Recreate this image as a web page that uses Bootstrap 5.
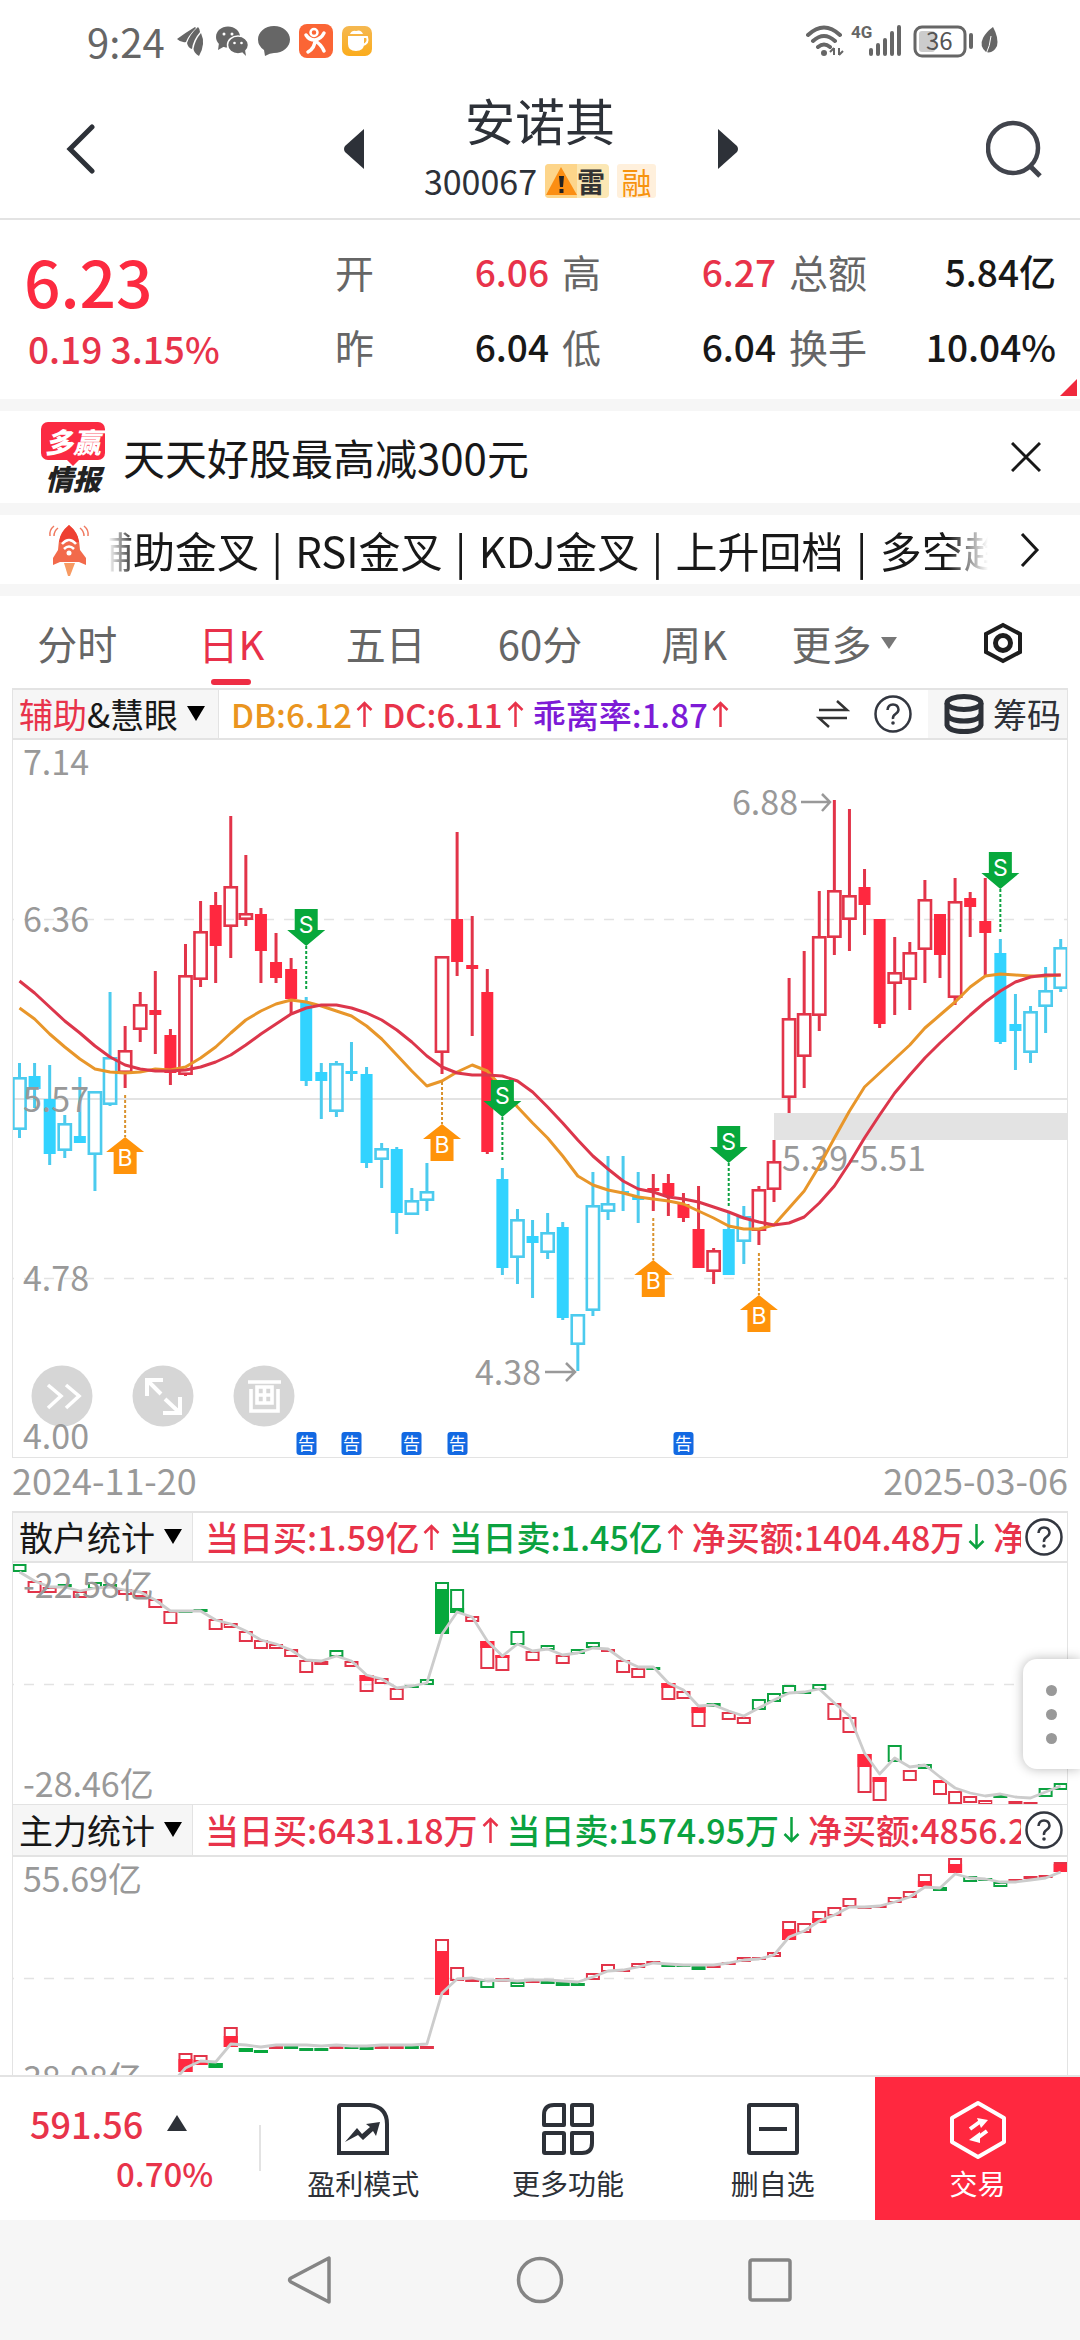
<!DOCTYPE html>
<html lang="zh-CN">
<head>
<meta charset="utf-8">
<meta name="viewport" content="width=device-width, initial-scale=1">
<title>安诺其 300067</title>
<link href="https://cdn.jsdelivr.net/npm/bootstrap@5.3.0/dist/css/bootstrap.min.css" rel="stylesheet">
<style>
:root{--up:#e8334a;--solid:#ff283f;--dn:#0ba23f;--ink:#2d3138;--line:#e3e3e3}
body{font-family:"Noto Sans CJK SC","Noto Sans",sans-serif;color:#181818;font-size:34px;line-height:1;background:#fff}
button{background:none;border:0;padding:0;color:inherit;font:inherit;line-height:1}
a{color:inherit;text-decoration:none}
svg{display:block;flex:none}
.app{height:100vh;overflow:hidden}
.c-up{color:var(--up)}.c-dn{color:var(--dn)}.c-db{color:#ea951f}.c-bias{color:#7d1bd6}
.fw-num{font-weight:500}
.status{height:80px;padding:2px 80px 0 87px;color:#666;font-size:40px}
.head{height:140px;border-bottom:2px solid var(--line);padding:0 38px 0 66px;color:var(--ink)}
.head .names{width:354px;padding:0 2px 11px 0}
.head .title{font-size:50px;font-weight:400;margin:0 0 15px}
.head .code{font-size:34px}
.tag-lei{background:#fbe7b4;color:#333;font-size:28px;height:34px;width:64px;border-radius:4px;font-weight:700}
.tag-rong{background:#fff0dc;color:#f7930e;font-size:30px;height:34px;width:39px;border-radius:3px}
.gap-bar{height:12px;background:#f6f6f6;flex:none}
.quote{height:179px;padding-left:24px}
.quote .last{width:311px;padding-bottom:4px}
.quote .price{font-size:64px;color:#fc2a40;font-weight:500;margin-bottom:18px}
.quote .chg{font-size:37px;padding-left:4px}
.quote dl{display:grid;grid-template-columns:214fr 214fr 267fr;column-gap:13px;row-gap:35px;margin:0;padding:0 24px 2px 0}
.quote dl>div{display:flex;justify-content:space-between;align-items:center;height:40px}
.quote dt{font-size:39px;font-weight:400;color:#666}
.quote dd{font-size:37px;font-weight:500;margin:0}
.corner{width:17px;height:17px;right:3px;bottom:3px;background:#f0293d;clip-path:polygon(100% 0,100% 100%,0 100%)}
.promo{height:92px;padding:0 39px 0 40px;font-size:42px}
.promo .brand{width:66px;margin-right:17px}
.promo .brand b{height:38px;font-size:28px;font-weight:900;font-style:italic;color:#fff;background:#fb2a42;border-radius:7px}
.promo .brand b::after{content:"";position:absolute;left:50%;top:100%;margin-left:-6px;border:6px solid transparent;border-top-color:#fb2a42;border-bottom:0}
.promo .brand i{font-size:28px;font-weight:900;color:#222}
.tick{height:69px;padding:0 40px 0 48px;font-size:42px}
.tick .run{text-indent:-17px;line-height:60px;-webkit-mask-image:linear-gradient(90deg,transparent 0,#000 28px,#000 calc(100% - 40px),transparent);mask-image:linear-gradient(90deg,transparent 0,#000 28px,#000 calc(100% - 40px),transparent)}
.tick .run s{text-decoration:none;margin:0 3px}
.tabs{height:92px;font-size:40px;color:#666}
.tabs>*{flex:1 1 0;height:92px;padding-top:1px}
.tabs .on{color:#e8304a}
.tabs .on::after{content:"";position:absolute;left:50%;bottom:3px;width:40px;height:6px;margin-left:-20px;border-radius:3px;background:#ee2d44}
.panel{margin:0 12px;border:1px solid var(--line);border-width:2px 1px 1px}
.bar{height:50px;border-bottom:2px solid var(--line)}
.bar .pick{flex:none;white-space:nowrap;background:#f6f6f6;border-right:1px solid var(--line);height:48px;width:206px;padding-left:6px}
.bar .vals{gap:8px;padding-left:12px;line-height:48px}
.bar .vals.ind{gap:9px;font-size:33px}
.bar .vals span{white-space:nowrap;display:inline-flex;align-items:center}
.bar .vals .arw{margin-left:4px}
.chips{background:#f6f6f6;height:48px;width:139px;gap:9px;padding-right:6px;color:var(--ink)}
.stat{border-top:0}
.stat .bar{height:52px}
.stat .bar .pick{height:50px}
.bar .pick.narrow{width:180px}
.dates{height:53px;font-size:36px;color:#999;margin:0 12px;padding-bottom:11px}
.chart{width:100%;height:auto;font-family:"Noto Sans CJK SC",sans-serif}
.arw{width:17px;height:28px}
.qm{width:38px;height:38px}
.side{right:0;top:1659px;width:57px;height:110px;gap:13px;background:#fff;border-radius:14px 0 0 14px;box-shadow:0 0 12px rgba(0,0,0,.28)}
.side i{width:11px;height:11px;border-radius:50%;background:#999}
.foot{height:145px;border-top:2px solid var(--line);background:#fff;color:var(--ink);font-size:28px;flex:none}
.foot .idx{width:261px;padding:0 0 3px 30px;height:143px}
.foot .idx::after{content:"";position:absolute;right:0;top:48px;height:46px;width:2px;background:var(--line)}
.foot .idx .pts{font-size:36px}
.foot .idx .pct{font-size:33px;padding-left:86px}
.foot .act{flex:1 1 0;height:143px;gap:13px;padding-top:2px}
.foot .trade{background:#ff283f;color:#fff;gap:9px;padding-top:0}
.sysnav{height:120px;background:#f6f6f6;flex:none}
.sysnav>*{width:230px}
</style>
</head>
<body>
<div class="app d-flex flex-column position-relative">

<div class="status d-flex align-items-center justify-content-between flex-shrink-0">
  <div class="d-flex align-items-center">
    <span>9:24</span>
    <svg class="ms-2 me-2" width="34" height="34" viewBox="0 0 34 34" fill="#666"><path d="M4 15Q12 9 22 3L23 4Q15 12 13 18Q8 19 4 15Z"/><path d="M25 3Q27 5 27 8Q20 16 19 25Q15 24 14 19Q17 10 25 3Z"/><path d="M28 9Q33 20 26 32Q21 29 20.500 25Q22 16 28 9Z"/></svg>
    <svg width="34" height="34" viewBox="0 0 34 34"><ellipse cx="13" cy="13" rx="12" ry="10.500" fill="#666"/><path d="M4 19L3 26L10 22Z" fill="#666"/><circle cx="9" cy="10" r="1.500" fill="#fff"/><circle cx="17" cy="10" r="1.500" fill="#fff"/><ellipse cx="23" cy="21" rx="10.500" ry="9" fill="#666" stroke="#fff" stroke-width="1.500"/><path d="M26 27L31 32L30 26Z" fill="#666"/><circle cx="19.500" cy="19" r="1.300" fill="#fff"/><circle cx="26.500" cy="19" r="1.300" fill="#fff"/></svg>
    <svg class="ms-2" width="34" height="32" viewBox="0 0 34 32" fill="#666"><path d="M17 1C26 1 33 7 33 14.500S26 28 17 28Q13 28 8 31L7 25Q1 21 1 14.500C1 7 8 1 17 1Z"/></svg>
    <svg class="ms-2" width="34" height="34" viewBox="0 0 34 34"><rect width="34" height="34" rx="8" fill="#fb6535"/><circle cx="15" cy="8.500" r="3.500" fill="none" stroke="#fff" stroke-width="2.500"/><path d="M7 11Q10 16 16 16Q22 15 25 9M16 16Q16 24 9 28M16 17Q22 20 25 27" fill="none" stroke="#fff" stroke-width="3.500" stroke-linecap="round"/></svg>
    <svg class="ms-2" width="34" height="30" viewBox="0 0 34 30"><defs><linearGradient id="cup" x2="0" y2="1"><stop stop-color="#f5b851"/><stop offset="1" stop-color="#fbac1c"/></linearGradient></defs><rect x="1" width="30" height="30" rx="7" fill="url(#cup)"/><path d="M7 10H23V18Q23 25 15 25Q7 25 7 18ZM9 8Q11 4 15 5Q20 3 22 8Z" fill="#fff"/><path d="M23 11H26Q28 17 22 19" fill="none" stroke="#fff" stroke-width="2"/></svg>
  </div>
  <svg width="194" height="36" viewBox="806 23 194 36" fill="none" stroke="#666"><path d="M808 35Q824 20 840 35M813 41Q824 31 835 41M818 47Q824 42 830 47" stroke-width="4" stroke-linecap="round"/><circle cx="824" cy="53" r="3" fill="#666" stroke="none"/><path d="M834 48V55M830 52L834 48M839 55V48M839 55L843 51" stroke-width="2"/><text x="851" y="38" font-size="17" font-weight="700" fill="#666" stroke="none" font-family="Roboto,sans-serif">4G</text><path d="M871 50V54M878 45V54M885 40V54M892 33V54M899 27V54" stroke-width="4" stroke-linecap="round"/><rect x="915" y="27" width="50" height="29" rx="7" stroke-width="3"/><rect x="919" y="31" width="16" height="21" rx="3" fill="#ccc" stroke="none"/><text x="926" y="50" font-size="24" fill="#555" stroke="none">36</text><path d="M971 35V47" stroke-width="4" stroke-linecap="round"/><path d="M993 27Q999 38 997 46Q993 54 986 52Q979 46 983 38Q986 32 993 27Z" fill="#666" stroke="none"/><path d="M991 36Q990 46 986 54" stroke="#fff" stroke-width="1"/></svg>
</div>

<header class="head d-flex align-items-center justify-content-between flex-shrink-0">
  <button aria-label="返回"><svg width="30" height="50" viewBox="0 0 30 50" fill="none" stroke="#2d3138" stroke-width="5" stroke-linecap="round"><path d="M26 3L4 25L26 47"/></svg></button>
  <div class="d-flex align-items-center">
    <button aria-label="上一只"><svg width="20" height="40" viewBox="0 0 20 40" fill="#2d3138"><path d="M20 0V40L1 23Q-1 20 1 17Z"/></svg></button>
    <div class="names text-center">
      <h1 class="title">安诺其</h1>
      <div class="code d-flex justify-content-center align-items-center"><span>300067</span>
        <span class="tag-lei d-flex align-items-center ms-2 me-1"><svg width="32" height="34" viewBox="0 0 32 34"><path d="M4 0H32V34H4Q0 34 0 30V4Q0 0 4 0Z" fill="#fdd58a"/><path d="M16 3L32 31H1Z" fill="#fb8e13"/><path d="M14 12H19L18 23H15ZM14.500 25H18.500V29H14.500Z" fill="#222"/></svg>雷</span>
        <span class="tag-rong d-flex align-items-center justify-content-center ms-1">融</span></div>
    </div>
    <button aria-label="下一只"><svg width="20" height="40" viewBox="0 0 20 40" fill="#2d3138"><path d="M0 0V40L19 23Q21 20 19 17Z"/></svg></button>
  </div>
  <button aria-label="搜索"><svg width="56" height="58" viewBox="0 0 56 58" fill="none" stroke="#41444c" stroke-width="4.500"><circle cx="27" cy="28" r="25"/><path d="M44 46L54 56" stroke-width="5"/></svg></button>
</header>

<section class="quote d-flex align-items-center position-relative flex-shrink-0">
  <div class="last"><div class="price">6.23</div><div class="chg fw-num c-up">0.19 3.15%</div></div>
  <dl class="flex-fill">
    <div><dt>开</dt><dd class="c-up">6.06</dd></div><div><dt>高</dt><dd class="c-up">6.27</dd></div><div><dt>总额</dt><dd>5.84亿</dd></div>
    <div><dt>昨</dt><dd>6.04</dd></div><div><dt>低</dt><dd>6.04</dd></div><div><dt>换手</dt><dd>10.04%</dd></div>
  </dl>
  <span class="corner position-absolute"></span>
</section>
<div class="gap-bar"></div>

<section class="promo d-flex align-items-center flex-shrink-0">
  <div class="brand d-flex flex-column align-items-center"><b class="position-relative d-flex align-items-center px-1 mb-1">多赢</b><i>情报</i></div>
  <span class="flex-fill">天天好股最高减300元</span>
  <button aria-label="关闭"><svg width="30" height="30" viewBox="0 0 30 30" stroke="#181818" stroke-width="3"><path d="M1 1L29 29M29 1L1 29"/></svg></button>
</section>
<div class="gap-bar"></div>

<section class="tick d-flex align-items-center flex-shrink-0">
  <svg width="44" height="52" viewBox="0 0 44 52"><path d="M21 1Q32 10 32 26L38 34V41L31 38H12L5 41V34L10 26Q10 10 21 1Z" fill="#f26a4b"/><path d="M21 1Q30 8 31 18H11Q12 8 21 1Z" fill="#ee4032"/><path d="M16 39H27L22 52H20Z" fill="#f79a62"/><path d="M14 20Q21 12 28 20M16 25Q21 20 26 25" fill="none" stroke="#fff" stroke-width="2.500"/><circle cx="21" cy="29" r="2.500" fill="#fff"/><path d="M6 2Q1 6 2 12M10 4Q6 7 6 12M36 2Q41 6 40 12M32 4Q36 7 36 12" fill="none" stroke="#f0795f" stroke-width="1.500"/></svg>
  <div class="run flex-fill overflow-hidden text-nowrap ms-3" style="min-width:0">辅助金叉<s> | </s>RSI金叉<s> | </s>KDJ金叉<s> | </s>上升回档<s> | </s>多空趋势</div>
  <button class="ms-4 ps-2" aria-label="更多信号"><svg width="20" height="34" viewBox="0 0 20 34" fill="none" stroke="#181818" stroke-width="3"><path d="M2 1L17 17L2 33"/></svg></button>
</section>
<div class="gap-bar"></div>

<nav class="tabs d-flex text-center flex-shrink-0">
  <a href="#" class="d-flex align-items-center justify-content-center">分时</a>
  <a href="#" class="on position-relative d-flex align-items-center justify-content-center">日K</a>
  <a href="#" class="d-flex align-items-center justify-content-center">五日</a>
  <a href="#" class="d-flex align-items-center justify-content-center">60分</a>
  <a href="#" class="d-flex align-items-center justify-content-center">周K</a>
  <a href="#" class="d-flex align-items-center justify-content-center">更多<svg class="ms-2 me-2" width="18" height="12" viewBox="0 0 18 12" fill="#777"><path d="M1 0H17L9 12Z"/></svg></a>
  <button class="d-flex align-items-center justify-content-center" aria-label="设置"><svg width="40" height="42" viewBox="0 0 40 42" fill="none" stroke="#1d1d1d" stroke-width="4"><path d="M20 3L37 12V30L20 39L3 30V12Z"/><circle cx="20" cy="21" r="7.500" stroke-width="5"/></svg></button>
</nav>

<main class="flex-fill overflow-hidden" style="min-height:0">
  <section class="panel">
    <div class="bar d-flex align-items-center">
      <button class="pick d-flex align-items-center"><span class="c-up">辅助</span>&amp;慧眼<svg class="ms-2" width="20" height="16" viewBox="0 0 20 16"><path d="M1 0H19L10 15Z"/></svg></button>
      <div class="vals ind d-flex flex-fill fw-num"><span class="c-db">DB:6.12<svg class="arw c-up"><use href="#up"/></svg></span><span class="c-up">DC:6.11<svg class="arw"><use href="#up"/></svg></span><span class="c-bias">乖离率:1.87<svg class="arw c-up"><use href="#up"/></svg></span></div>
      <button class="me-4" aria-label="切换"><svg width="34" height="30" viewBox="0 0 34 30" fill="none" stroke="#333" stroke-width="2.500"><path d="M3 11H31L21 2M31 19H3L13 28"/></svg></button>
      <button class="me-3" aria-label="帮助"><svg class="qm"><use href="#help"/></svg></button>
      <button class="chips d-flex align-items-center justify-content-end"><svg width="40" height="40" viewBox="0 0 40 40" fill="none" stroke="#2d3138" stroke-width="5"><ellipse cx="20" cy="9" rx="17" ry="6.500"/><path d="M3 9V31Q5 37.500 20 37.500T37 31V9M3 20Q5 27 20 27T37 20"/></svg>筹码</button>
    </div>
    <svg class="chart" id="kline" viewBox="13 740 1054 717"></svg>
  </section>
  <div class="dates d-flex justify-content-between align-items-center"><span>2024-11-20</span><span>2025-03-06</span></div>
  <section class="panel">
    <div class="bar d-flex align-items-center">
      <button class="pick narrow d-flex align-items-center">散户统计<svg class="ms-2" width="20" height="16" viewBox="0 0 20 16"><path d="M1 0H19L10 15Z"/></svg></button>
      <div class="vals d-flex flex-fill overflow-hidden fw-num" style="min-width:0"><span class="c-up">当日买:1.59亿<svg class="arw"><use href="#up"/></svg></span><span class="c-dn">当日卖:1.45亿<svg class="arw c-up"><use href="#up"/></svg></span><span class="c-up">净买额:1404.48万<svg class="arw c-dn"><use href="#down"/></svg></span><span class="c-up">净占比</span></div>
      <button class="mx-1" aria-label="帮助"><svg class="qm"><use href="#help"/></svg></button>
    </div>
    <svg class="chart" id="retail" viewBox="13 1562 1054 241"></svg>
  </section>
  <section class="panel stat">
    <div class="bar d-flex align-items-center">
      <button class="pick narrow d-flex align-items-center">主力统计<svg class="ms-2" width="20" height="16" viewBox="0 0 20 16"><path d="M1 0H19L10 15Z"/></svg></button>
      <div class="vals d-flex flex-fill overflow-hidden fw-num" style="min-width:0"><span class="c-up">当日买:6431.18万<svg class="arw"><use href="#up"/></svg></span><span class="c-dn">当日卖:1574.95万<svg class="arw"><use href="#down"/></svg></span><span class="c-up">净买额:4856.23万</span></div>
      <button class="mx-1" aria-label="帮助"><svg class="qm"><use href="#help"/></svg></button>
    </div>
    <svg class="chart" id="main" viewBox="13 1857 1054 242"></svg>
  </section>
</main>

<footer class="foot d-flex align-items-center">
  <div class="idx position-relative d-flex flex-column justify-content-center gap-3 fw-num c-up">
    <div class="pts d-flex align-items-center">591.56<svg class="ms-4" width="20" height="16" viewBox="0 0 20 16" fill="#2d3138"><path d="M10 0L20 16H0Z"/></svg></div>
    <div class="pct">0.70%</div>
  </div>
  <button class="act d-flex flex-column align-items-center justify-content-center"><svg width="54" height="54" viewBox="0 0 54 54" fill="none" stroke="#2d3138" stroke-width="4"><path d="M5 3H34Q51 5 51 22V51H3V5Q3 3 5 3Z"/><path d="M9 40L21 26L26 32L34 25L30 22L44 20L40 34L37 29L27 38L22 33Z" fill="#2d3138" stroke="none"/></svg>盈利模式</button>
  <button class="act d-flex flex-column align-items-center justify-content-center"><svg width="54" height="54" viewBox="0 0 54 54" fill="none" stroke="#2d3138" stroke-width="4" stroke-linejoin="round"><path d="M13 3H23V23H3V13Q3 3 13 3Z"/><rect x="31" y="3" width="20" height="20" rx="1"/><rect x="3" y="31" width="20" height="20" rx="1"/><path d="M31 31H51V41Q51 51 41 51H31Z"/></svg>更多功能</button>
  <button class="act d-flex flex-column align-items-center justify-content-center"><svg width="54" height="54" viewBox="0 0 54 54" fill="none" stroke="#2d3138" stroke-width="4"><rect x="3" y="3" width="48" height="48" rx="1"/><path d="M13 27H41"/></svg>删自选</button>
  <button class="act trade d-flex flex-column align-items-center justify-content-center"><svg width="56" height="60" viewBox="0 0 56 60" fill="none" stroke="#fff" stroke-width="4" stroke-linejoin="round"><path d="M28 3L54 18V42L28 57L2 42V18Z"/><path d="M20 29L31 21M37 31L26 39" stroke-width="4"/><path d="M27 18L38 20L31 28ZM30 32L19 40L30 43Z" fill="#fff" stroke="none"/></svg>交易</button>
</footer>
<div class="sysnav d-flex justify-content-center align-items-center">
  <button class="d-flex justify-content-center" aria-label="后退"><svg width="46" height="48" viewBox="0 0 46 48" fill="none" stroke="#858585" stroke-width="3.500" stroke-linejoin="round"><path d="M42 2V46L4 26Q1 24 4 22Z"/></svg></button>
  <button class="d-flex justify-content-center" aria-label="主页"><svg width="48" height="48" viewBox="0 0 48 48" fill="none" stroke="#858585" stroke-width="3.500"><circle cx="24" cy="24" r="21.500"/></svg></button>
  <button class="d-flex justify-content-center" aria-label="最近任务"><svg width="44" height="44" viewBox="0 0 44 44" fill="none" stroke="#858585" stroke-width="3.500"><rect x="2" y="2" width="40" height="40" rx="2"/></svg></button>
</div>

<button class="side position-absolute d-flex flex-column justify-content-center align-items-center" aria-label="展开"><i></i><i></i><i></i></button>
</div>

<svg width="0" height="0" class="position-absolute">
  <symbol id="up" viewBox="0 0 17 28"><path d="M8.500 27V3M1.500 10L8.500 3L15.500 10" fill="none" stroke="currentColor" stroke-width="2.500"/></symbol>
  <symbol id="down" viewBox="0 0 17 28"><path d="M8.500 1V25M1.500 18L8.500 25L15.500 18" fill="none" stroke="currentColor" stroke-width="2.500"/></symbol>
  <symbol id="help" viewBox="0 0 38 38"><circle cx="19" cy="19" r="17.500" fill="none" stroke="#333740" stroke-width="2.500"/><path d="M13.500 15Q14 9.500 19 9.500T24.500 14.500Q24.500 17 21.500 19T19 24" fill="none" stroke="#333740" stroke-width="2.500"/><circle cx="19" cy="28" r="1.800" fill="#333740"/></symbol>
</svg>

<script src="https://cdn.jsdelivr.net/npm/bootstrap@5.3.0/dist/js/bootstrap.bundle.min.js"></script>
<script>
const X = i => 19.5 + 15.09 * i;
const UP = '#e23449', UPF = '#ff283f', DN = '#4ccbee', DNF = '#32d3ff', G = '#0ca240';
const label = (x, y, t) => `<text x="${x}" y="${y}" font-size="34" fill="#999">${t}</text>`;
const dash = y => `<path d="M12 ${y}H14M24 ${y}H1068" stroke="#e3e3e3" stroke-width="1.5" stroke-dasharray="10 10"/>`;
const poly = (a, c, w, from = 0) => `<polyline points="${a.map((y, i) => X(i + from).toFixed(1) + ',' + y).join(' ')}" fill="none" stroke="${c}" stroke-width="${w}" stroke-linejoin="round"/>`;

// kind, high, body top, body bottom, low; upper case = solid body, r red / c cyan
const K = `c 1063 1077 1130 1138|C 1063 1076 1089 1108|C 1065 1099 1154 1165|c 1115 1123 1151 1158|C 1077 1136 1143 1143|c 1091 1091 1155 1191|c 992 1057 1105 1106|r 1026 1050 1073 1088|r 992 1004 1030 1042|R 971 1010 1015 1054|R 1029 1035 1073 1085|r 944 975 1075 1076|r 901 931 980 987|R 892 905 946 983|r 816 886 927 958|r 855 913 920 926|R 908 914 951 983|R 933 962 978 983|R 958 969 999 1014|C 997 1002 1081 1086|C 1063 1072 1081 1119|c 1061 1063 1112 1117|C 1042 1071 1074 1081|C 1067 1074 1163 1168|c 1143 1148 1160 1188|C 1147 1149 1213 1234|c 1188 1200 1215 1215|c 1163 1191 1201 1211|r 956 956 1053 1074|R 832 919 962 976|R 916 965 969 1036|R 969 992 1152 1154|C 1168 1179 1268 1275|c 1209 1219 1258 1284|C 1220 1236 1243 1298|c 1213 1232 1253 1259|C 1222 1227 1318 1320|c 1314 1314 1345 1371|c 1172 1205 1311 1316|c 1156 1203 1212 1220|C 1156 1191 1193 1211|C 1172 1197 1200 1223|R 1174 1188 1191 1211|R 1174 1183 1196 1216|R 1193 1204 1218 1222|R 1186 1229 1268 1268|r 1248 1250 1272 1284|C 1213 1229 1275 1275|c 1206 1216 1242 1264|r 1186 1189 1231 1245|r 1140 1161 1190 1202|r 978 1018 1098 1113|r 951 1013 1057 1088|r 891 936 1016 1031|r 800 890 938 955|r 809 895 920 951|R 869 887 905 935|R 919 919 1024 1028|r 937 972 984 1015|r 942 952 980 1010|r 880 899 950 983|R 914 914 955 978|r 878 901 998 1005|R 892 898 907 937|R 878 921 933 976|C 939 953 1042 1044|C 994 1024 1031 1070|c 1006 1011 1053 1063|c 967 990 1007 1033|c 939 947 989 992`.split('|');
const DB = [1008,1019,1034,1047,1059,1069,1072,1073,1072,1069,1070,1067,1058,1047,1033,1020,1011,1004,1000,1002,1006,1011,1016,1026,1039,1055,1071,1086,1081,1072,1065,1071,1088,1107,1123,1138,1156,1176,1185,1190,1193,1197,1199,1201,1204,1211,1218,1226,1229,1229,1225,1208,1191,1166,1138,1111,1087,1073,1059,1045,1028,1015,1002,987,976,974,975,976,976,975];
const DC = [981,993,1007,1021,1033,1046,1057,1065,1069,1071,1071,1070,1067,1062,1055,1045,1034,1024,1014,1008,1005,1005,1008,1013,1020,1030,1042,1056,1067,1073,1075,1075,1076,1081,1092,1107,1123,1140,1156,1169,1181,1189,1192,1197,1199,1202,1207,1212,1218,1222,1225,1223,1217,1203,1186,1163,1138,1115,1093,1075,1058,1043,1029,1015,1002,991,982,977,975,975];

let s = dash(919.5) + dash(1278.5) + '<path d="M12 1099H1068" stroke="#e3e3e3" stroke-width="2"/><rect x="774" y="1113" width="294" height="27" fill="#e3e3e3"/>';
K.forEach((row, i) => {
  const [k, ...v] = row.split(' '), [h, t, b, l] = v.map(Number), x = X(i);
  const red = k.toLowerCase() === 'r', c = red ? UP : DN, solid = k < 'a';
  s += `<path d="M${x} ${h}V${t}M${x} ${b}V${l}" stroke="${c}" stroke-width="3"/>`;
  s += solid ? `<rect x="${x - 6}" y="${t}" width="12" height="${b - t}" fill="${red ? UPF : DNF}"/>` + (b - t < 6 ? `<path d="M${x} ${t}V${b}" stroke="${c}" stroke-width="3"/>` : '')
    : `<rect x="${x - 6.1}" y="${t + 1.3}" width="12.2" height="${b - t - 2.6}" fill="none" stroke="${c}" stroke-width="2.6"/>`;
});
s += label(782, 1171, '5.39-5.51') + poly(DB, '#e8962a', 3) + poly(DC, '#dc364b', 3);
const mark = (x, y, t) => `<text x="${x}" y="${y}" font-family="Inter,sans-serif" font-size="23" text-anchor="middle" fill="#fff">${t}</text>`;
const sell = (i, y) => { const x = X(i); return `<path d="M${x} ${y + 37}V${y + 80}" stroke="${G}" stroke-width="2" stroke-dasharray="3 2"/><path d="M${x - 11.5} ${y}h23v21h7.500L${x} ${y + 37}L${x - 19} ${y + 21}h7.500Z" fill="#07a83c"/>` + mark(x, y + 24, 'S'); };
const buy = (i, y) => { const x = X(i); return `<path d="M${x} ${y - 42}V${y}" stroke="#d9922e" stroke-width="2" stroke-dasharray="3 2"/><path d="M${x - 11.5} ${y + 37}h23v-22h7.500L${x} ${y}L${x - 19} ${y + 15}h7.500Z" fill="#ff930a"/>` + mark(x, y + 29, 'B'); };
s += sell(19, 909) + sell(32, 1080) + sell(47, 1126) + sell(65, 852) + buy(7, 1137) + buy(28, 1124) + buy(42, 1260) + buy(49, 1295);
s += [62, 163, 264].map(x => `<circle cx="${x}" cy="1396" r="30.5" fill="#d6d6d6"/>`).join('');
s += '<g fill="none" stroke="#fff" stroke-width="3.6"><path d="M48 1385L61 1396L48 1408M66 1385L79 1396L66 1408"/><path d="M161 1394L147 1380M147 1396V1380H163M165 1399L180 1413M163 1413H180V1397" stroke-width="4"/><path d="M248 1382H281M251 1389V1411H278V1389M257 1387H272V1403H257ZM264.500 1387V1403M257 1395H272"/></g>';
s += label(23, 775, '7.14') + label(23, 932, '6.36') + label(23, 1112, '5.57') + label(23, 1291, '4.78') + label(23, 1449, '4.00') + label(732, 815, '6.88') + label(475, 1385, '4.38');
s += '<path d="M801 802H830M822 794L830 802L822 811M545 1372H575M566 1363L575 1372L566 1381" fill="none" stroke="#999" stroke-width="2.5"/>';
s += [306.5, 351.5, 411.5, 457.5, 683.5].map(x => `<rect x="${x - 10}" y="1432" width="20" height="23" rx="3" fill="#1369e2"/><text x="${x}" y="1450" font-size="17" text-anchor="middle" fill="#fff">告</text>`).join('');
document.getElementById('kline').innerHTML = s;

// colour, top, bottom, [solid from, solid to]
function bars(rows, from) {
  return rows.split('|').map((r, n) => {
    if (!r) return '';
    const [k, ...v] = r.split(' '), [t, b, f, e] = v.map(Number), x = X(n + from), c = k === 'g' ? G : UP;
    return `<rect x="${x - 6}" y="${t + 1}" width="12" height="${Math.max(b - t - 2, 1)}" fill="none" stroke="${c}" stroke-width="2"/>` +
      (f ? `<rect x="${x - 7}" y="${f}" width="14" height="${e - f}" fill="${k === 'g' ? '#07a83c' : UPF}"/>` : '');
  }).join('');
}
const R = 'g 1563 1571|r 1580 1592|r 1586 1592|g 1583 1586|r 1590 1597|g 1581 1588|g 1583 1585|r 1588 1594|r 1590 1596|r 1598 1607|r 1610 1623|g 1609 1611|g 1608 1611|r 1618 1629|r 1622 1627|r 1630 1641|r 1639 1648|r 1643 1648|r 1648 1656|r 1659 1672|r 1660 1664|g 1649 1656|r 1660 1666|r 1674 1691 1674 1680|r 1677 1683|r 1687 1699|g 1684 1687|g 1678 1684|g 1581 1633 1588 1633|g 1588 1612 1607 1612|r 1615 1621|r 1640 1668 1640 1647|r 1654 1670 1654 1657|g 1630 1644|r 1650 1660|g 1644 1649|r 1654 1663|g 1648 1653|g 1641 1647|r 1648 1651|r 1659 1672|r 1667 1677|g 1666 1668|r 1682 1699 1682 1687|r 1690 1698|r 1706 1726 1706 1712|g 1702 1706|r 1711 1719|r 1716 1723|g 1698 1709|g 1692 1701|g 1684 1693|g 1690 1693|g 1683 1689|r 1702 1719|r 1716 1732|r 1753 1792 1753 1766|r 1776 1800 1776 1781|g 1744 1761|r 1769 1780|g 1763 1768|r 1779 1794 1779 1782|r 1790 1803|r 1795 1802|r 1799 1804|g 1793 1797|r 1800 1804|r 1801 1803|g 1787 1796|g 1782 1789';
const RL = [1571,1580,1586,1586,1590,1587,1586,1589,1591,1599,1610,1610,1610,1619,1623,1630,1639,1643,1649,1659,1660,1655,1660,1674,1678,1687,1685,1682,1633,1611,1616,1640,1655,1643,1650,1648,1654,1652,1647,1648,1659,1666,1666,1682,1689,1705,1704,1710,1715,1707,1699,1692,1691,1688,1702,1715,1752,1773,1757,1766,1764,1776,1787,1792,1795,1793,1796,1797,1791,1785];
document.getElementById('retail').innerHTML = dash(1683.5) + bars(R, 0) + poly(RL, '#ccc', 2.8) + label(23, 1597, '-22.58亿') + label(23, 1796, '-28.46亿');

const M = 'r 2053 2072 2059 2072|r 2055 2065 2060 2065|g 2063 2068 2063 2068|r 2027 2047 2036 2047|g 2048 2052 2048 2052|g 2050 2053 2050 2053|r 2046 2049|g 2046 2049|g 2048 2051|g 2048 2051|r 2046 2049|g 2046 2049|g 2047 2050|r 2046 2049|r 2046 2049|g 2046 2049|r 2046 2049|r 1939 1995 1951 1995|r 1967 1981|r 1979 1981|g 1980 1988|r 1978 1982|g 1982 1987|r 1980 1983|g 1981 1984|g 1982 1986|g 1983 1986|r 1973 1980|r 1964 1972|r 1969 1972|r 1963 1968|r 1961 1964|g 1964 1967|g 1964 1967|g 1966 1970|r 1965 1967|r 1962 1965|r 1957 1962|r 1957 1960|r 1952 1957|r 1921 1940 1929 1940|r 1923 1933|r 1911 1923 1918 1923|r 1907 1916|r 1898 1907|r 1906 1908|r 1905 1907|r 1897 1903|r 1891 1898|r 1874 1887 1881 1887|g 1887 1891|r 1858 1873 1864 1873|g 1876 1882|g 1878 1880|g 1882 1887|r 1879 1882|r 1876 1879|r 1875 1878|r 1862 1872 1864 1872';
const ML = [2085,2068,2061,2062,2044,2045,2047,2045,2045,2045,2046,2045,2046,2046,2045,2045,2045,2044,1993,1979,1978,1981,1980,1981,1980,1980,1981,1982,1977,1971,1970,1967,1963,1964,1965,1965,1965,1963,1960,1959,1955,1937,1931,1921,1915,1907,1907,1906,1902,1897,1887,1888,1874,1878,1879,1882,1882,1880,1878,1872];
document.getElementById('main').innerHTML = dash(1978.5) + bars(M, 11) + poly(ML, '#ccc', 2.8, 10) + label(23, 1892, '55.69亿') + label(23, 2091, '38.98亿');
</script>
</body>
</html>
